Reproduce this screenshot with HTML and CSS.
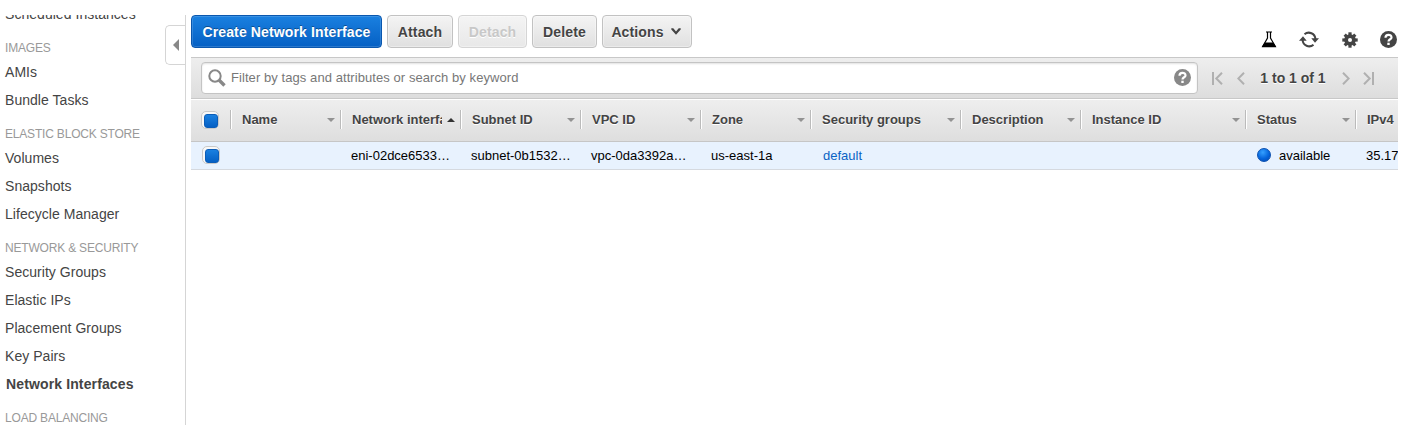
FILE: index.html
```
<!DOCTYPE html>
<html lang="en">
<head>
<meta charset="utf-8">
<title>Network Interfaces</title>
<link rel="stylesheet" href="styles.css">
</head>
<body>
<div class="app">
  <aside class="sidebar">
    <nav class="nav">
      <a class="item">Scheduled Instances</a>
      <h2>IMAGES</h2>
      <a class="item">AMIs</a>
      <a class="item">Bundle Tasks</a>
      <h2>ELASTIC BLOCK STORE</h2>
      <a class="item">Volumes</a>
      <a class="item">Snapshots</a>
      <a class="item">Lifecycle Manager</a>
      <h2>NETWORK &amp; SECURITY</h2>
      <a class="item">Security Groups</a>
      <a class="item">Elastic IPs</a>
      <a class="item">Placement Groups</a>
      <a class="item">Key Pairs</a>
      <a class="item current">Network Interfaces</a>
      <h2>LOAD BALANCING</h2>
    </nav>
    <div class="collapse"><svg width="6" height="12" viewBox="0 0 6 12"><path d="M6 0v12L0 6z" fill="#888"/></svg></div>
  </aside>
  <main class="main">
    <div class="toolbar">
      <button class="btn primary">Create Network Interface</button>
      <button class="btn attach">Attach</button>
      <button class="btn detach disabled">Detach</button>
      <button class="btn delete">Delete</button>
      <button class="btn actions">Actions <svg width="10" height="7" viewBox="0 0 10 7"><path d="M.3.300h2L5 3.400 7.700.300h2v1.200L5 6.700.3 1.500z" fill="#444"/></svg></button>
      <div class="tools">
        <svg width="16" height="17" viewBox="0 0 16 17"><path d="M5 1h6M6.500 1v6L1.800 15.300h12.400L9.500 7V1" fill="none" stroke="#000" stroke-width="1.200"/><path d="M3.600 11.500h8.800l3 4.800H.6z" fill="#000"/></svg>
        <svg width="20" height="17" viewBox="0 0 20 17"><path d="M5.500 3.300A6.600 6.600 0 0 1 16.400 8M14.500 13.700A6.600 6.600 0 0 1 3.600 9" fill="none" stroke="#444" stroke-width="2"/><path d="M12.300 7.200H20L16 11.800zM0 9.800h7.700L4 5.200z" fill="#444"/></svg>
        <svg width="16" height="16" viewBox="-8 -8 16 16"><g fill="#444"><circle r="5.800"/><rect x="-1.600" y="-7.700" width="3.200" height="15.400"/><rect x="-7.700" y="-1.600" width="15.400" height="3.200"/><rect x="-1.600" y="-7.500" width="3.200" height="15" transform="rotate(45)"/><rect x="-1.600" y="-7.500" width="3.200" height="15" transform="rotate(-45)"/></g><circle r="2" fill="#fff"/></svg>
        <svg width="17" height="17" viewBox="0 0 17 17"><circle cx="8.500" cy="8.500" r="8.500" fill="#444"/><path d="M5.500 6.700C5.500 3 11.500 3 11.500 6.400C11.500 8.300 8.500 8.300 8.500 10.500" fill="none" stroke="#fff" stroke-width="2.200"/><rect x="7.300" y="11.700" width="2.400" height="2.300" fill="#fff"/></svg>
      </div>
    </div>
    <div class="filter">
      <div class="search">
        <svg width="18" height="18" viewBox="0 0 18 18"><circle cx="7" cy="7" r="5.700" fill="none" stroke="#888" stroke-width="2"/><path d="M11 11l5.500 5.500" stroke="#888" stroke-width="3.400"/></svg>
        <span class="hint">Filter by tags and attributes or search by keyword</span>
        <svg width="17" height="17" viewBox="0 0 17 17"><circle cx="8.500" cy="8.500" r="8.500" fill="#888"/><path d="M5.500 6.700C5.500 3 11.500 3 11.500 6.400C11.500 8.300 8.500 8.300 8.500 10.500" fill="none" stroke="#fff" stroke-width="2.200"/><rect x="7.300" y="11.700" width="2.400" height="2.300" fill="#fff"/></svg>
      </div>
      <div class="pager">
        <svg width="11" height="13" viewBox="0 0 11 13"><path d="M1 0v13M10 .8L4.300 6.500 10 12.200"/></svg>
        <svg width="8" height="13" viewBox="0 0 8 13"><path d="M7 .8L1.300 6.500 7 12.200"/></svg>
        <span class="count">1 to 1 of 1</span>
        <svg width="8" height="13" viewBox="0 0 8 13"><path d="M1 .8L6.700 6.500 1 12.200"/></svg>
        <svg width="11" height="13" viewBox="0 0 11 13"><path d="M10 0v13M1 .8L6.700 6.500 1 12.200"/></svg>
      </div>
    </div>
    <div class="grid head">
      <div class="check"><i class="box"></i></div>
      <div class="th"><span>Name</span><i class="caret"></i></div>
      <div class="th"><span>Network interface ID</span><i class="caret up"></i></div>
      <div class="th"><span>Subnet ID</span><i class="caret"></i></div>
      <div class="th"><span>VPC ID</span><i class="caret"></i></div>
      <div class="th"><span>Zone</span><i class="caret"></i></div>
      <div class="th"><span>Security groups</span><i class="caret"></i></div>
      <div class="th"><span>Description</span><i class="caret"></i></div>
      <div class="th"><span>Instance ID</span><i class="caret"></i></div>
      <div class="th"><span>Status</span><i class="caret"></i></div>
      <div class="th last"><span>IPv4</span></div>
    </div>
    <div class="grid row">
      <div class="check"><i class="box"></i></div>
      <div class="td"></div>
      <div class="td">eni-02dce6533…</div>
      <div class="td">subnet-0b1532…</div>
      <div class="td">vpc-0da3392a…</div>
      <div class="td">us-east-1a</div>
      <div class="td"><a class="link">default</a></div>
      <div class="td"></div>
      <div class="td"></div>
      <div class="td status"><i class="dot"></i>available</div>
      <div class="td last">35.17</div>
    </div>
  </main>
</div>
</body>
</html>
```
FILE: styles.css
```
* { box-sizing: border-box; }
body {
  margin: 0;
  background: #fff;
  color: #444;
  font-family: "Liberation Sans", Arial, sans-serif;
  overflow: hidden;
}
svg { display: block; flex: none; }
.app { display: flex; gap: 5px; height: 425px; padding: 15px 14px 0 0; overflow: hidden; }

.sidebar { position: relative; width: 186px; flex: none; height: 410px; border-right: 1px solid #d5d5d5; overflow: hidden; }
.nav { margin-top: -15px; padding-left: 5px; }
.nav h2 { margin: 0; height: 30px; padding-top: 5px; font-size: 12px; font-weight: 400; line-height: 30px; letter-spacing: -.19px; color: #999; }
.item { display: block; height: 28px; font-size: 14px; line-height: 29px; letter-spacing: .04px; color: #444; }
.item.current { padding-left: 1px; font-weight: 700; letter-spacing: .13px; }
.collapse {
  position: absolute; top: 10px; right: -1px; width: 21px; height: 40px;
  display: flex; align-items: center; padding-left: 7px;
  border: 1px solid #d5d5d5; border-right: 0; border-radius: 5px 0 0 5px; background: #fff;
}

.main { flex: 1; min-width: 0; overflow: hidden; }
.toolbar { display: flex; gap: 5px; height: 42px; }
.btn {
  height: 33px; padding: 0; display: flex; align-items: center; justify-content: center; gap: 7px;
  border: 1px solid #c2c2c2; border-radius: 4px;
  background: linear-gradient(#f4f4f4, #e0e0e0);
  box-shadow: inset 0 0 0 1px rgba(255,255,255,.35);
  color: #444; font: 700 14px "Liberation Sans", Arial, sans-serif; letter-spacing: .13px; text-shadow: 0 1px 0 #fff;
}
.primary { width: 191px; border-color: #0a57ae; background: linear-gradient(#1a80e0, #0560c4); color: #fff; text-shadow: 0 -1px 0 rgba(0,0,0,.35); box-shadow: inset 0 0 0 1px rgba(255,255,255,.15); }
.attach { width: 66px; }
.detach { width: 69px; }
.delete { width: 65px; }
.actions { width: 90px; padding-right: 2px; }
.disabled { color: #c8c8c8; border-color: #d5d5d5; background: linear-gradient(#f4f4f4, #e8e8e8); }
.tools { display: flex; align-items: center; gap: 22px; margin-left: auto; padding: 7px 1px 0 0; }
.tools svg:nth-child(2) { margin-right: 1px; }

.filter { display: flex; height: 42px; padding: 4px 0 0 10px; border-top: 1px solid #c8c8c8; border-bottom: 1px solid #c8c8c8; background: linear-gradient(#eee, #ddd); }
.search { display: flex; align-items: center; width: 997px; height: 32px; padding: 0 6px; border: 1px solid #c4c4c4; border-radius: 4px; background: #fff; box-shadow: inset 0 1px 2px rgba(0,0,0,.12); }
.search svg:last-child { margin-bottom: 1px; }
.hint { flex: 1; padding: 0 0 1px 5px; color: #777; font-size: 13px; letter-spacing: .07px; }
.pager { display: flex; align-items: center; height: 32px; padding: 0 0 0 14px; }
.pager path { fill: none; stroke: #b0b0b0; stroke-width: 2; }
.pager svg:nth-child(2) { margin-left: 14px; }
.count { width: 97px; padding-right: 1px; text-align: center; font-size: 14px; font-weight: 700; text-shadow: 0 1px 0 #fff; }
.pager svg:last-child { margin-left: 13px; }

.grid { display: grid; grid-template-columns: 39px 110px 120px 120px 120px 110px 150px 120px 165px 110px 43px; }
.head { height: 43px; padding-top: 7px; border-top: 1px solid #fff; border-bottom: 1px solid #c6c6c6; background: linear-gradient(#eee, #dedede); }
.check { padding-left: 10px; }
.box { display: block; width: 18px; height: 18px; padding: 2px; border: 1px solid #c9c9c9; border-radius: 5px; background: #f8f8f8; }
.box::before { content: ""; display: block; width: 12px; height: 12px; border: 1px solid #0b5db8; border-radius: 3px; background: linear-gradient(#1a80e0, #0560c4); }
.head .box { margin-top: 4px; }
.row .check { padding: 4px 0 0 11px; }
.th { display: flex; align-items: center; height: 19px; margin-top: 3px; padding: 0 5px 0 10px; border-left: 1px solid #bbb; box-shadow: inset 1px 0 #fff; font-size: 13px; font-weight: 700; text-shadow: 0 1px 0 #fff; white-space: nowrap; }
.th span { flex: 1; min-width: 0; overflow: hidden; padding-left: 1px; }
.th.last { padding-right: 0; }
.caret { width: 0; height: 0; margin-left: 5px; border: 4px solid transparent; border-top-color: #929292; border-bottom: 0; }
.caret.up { border-top: 0; border-bottom: 4px solid #333; }
.row { height: 28px; border-bottom: 1px solid #d5d9df; background: #e8f2fe; color: #000; }
.td { padding-left: 11px; font-size: 13px; line-height: 27px; white-space: nowrap; overflow: hidden; }
.link { padding-left: 2px; color: #0a62c4; }
.status { display: flex; align-items: center; gap: 8px; padding-left: 12px; }
.dot { width: 14px; height: 14px; margin-bottom: 1px; border: 1px solid #0a4fb0; border-radius: 50%; background: radial-gradient(circle at 40% 28%, #35a0ff, #0565dc 55%, #0347b0); }
```
